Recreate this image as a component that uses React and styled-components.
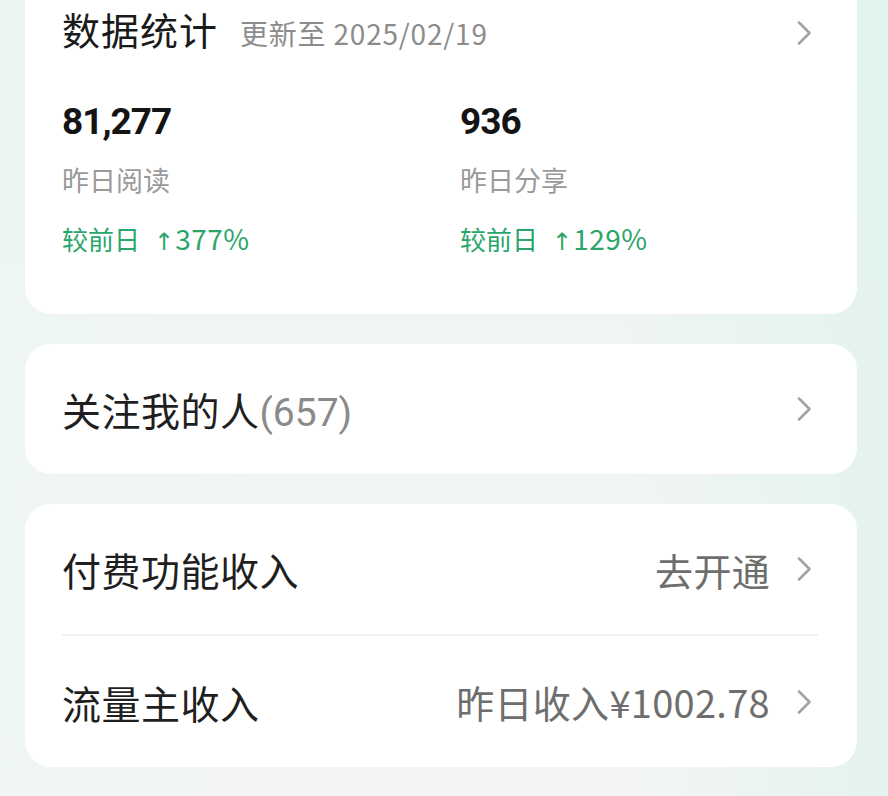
import React from "react";
import styled, { createGlobalStyle } from "styled-components";

const GlobalStyle = createGlobalStyle`
  html, body {
    margin: 0;
    padding: 0;
  }
  body {
    font-family: "Noto Sans CJK SC", "Noto Sans", sans-serif;
    background: #f3f5f5;
  }
`;

const Chevron = () => (
  <ChevronIcon width="16" height="26" viewBox="0 0 16 26" fill="none">
    <path d="M3 2.5 L13.5 13 L3 23.5" stroke="currentColor" strokeWidth="2.6" strokeLinecap="round" strokeLinejoin="round" />
  </ChevronIcon>
);

const stats = [
  { value: "81,277", label: "昨日阅读", change: "377%" },
  { value: "936", label: "昨日分享", change: "129%" },
];

const App = () => {
  return (
    <Page>
      <GlobalStyle />
      <StatsCard>
        <TitleRow>
          <TitleGroup>
            <Title>数据统计</Title>
            <UpdateText>更新至 2025/02/19</UpdateText>
          </TitleGroup>
          <TitleArrow>
            <Chevron />
          </TitleArrow>
        </TitleRow>
        <StatsGrid>
          {stats.map((s) => (
            <StatItem key={s.label}>
              <StatValue>{s.value}</StatValue>
              <StatLabel>{s.label}</StatLabel>
              <StatChange>
                <span>较前日</span>
                <Arrow>↑</Arrow>
                <ChangeNum>{s.change}</ChangeNum>
              </StatChange>
            </StatItem>
          ))}
        </StatsGrid>
      </StatsCard>

      <Card>
        <Row>
          <RowLabel>
            关注我的人<Count>(657)</Count>
          </RowLabel>
          <RowRight>
            <Chevron />
          </RowRight>
        </Row>
      </Card>

      <Card>
        <Row>
          <RowLabel>付费功能收入</RowLabel>
          <RowRight>
            <RowValue>去开通</RowValue>
            <Chevron />
          </RowRight>
        </Row>
        <Divider />
        <Row $tall>
          <RowLabel>流量主收入</RowLabel>
          <RowRight>
            <RowValue>昨日收入¥1002.78</RowValue>
            <Chevron />
          </RowRight>
        </Row>
      </Card>
    </Page>
  );
};

export default App;

const Page = styled.div`
  min-height: 796px;
  box-sizing: border-box;
  padding: 0 31px 30px 25px;
  display: flex;
  flex-direction: column;
  gap: 30px;
  background:
    linear-gradient(90deg, rgba(238, 246, 244, 0.9) 0%, rgba(255, 255, 255, 0) 30%, rgba(255, 255, 255, 0) 70%, rgba(226, 243, 238, 0.9) 100%),
    linear-gradient(180deg, #e9f5f2 0%, #eff5f4 40%, #f3f5f5 70%, #f4f5f5 100%);
`;

const Card = styled.div`
  background: #ffffff;
  border-radius: 26px;
  padding: 0 45px 0 37px;
`;

const StatsCard = styled(Card)`
  border-radius: 0 0 26px 26px;
  padding-top: 1px;
  padding-bottom: 54px;
`;

const TitleRow = styled.div`
  display: flex;
  align-items: center;
  justify-content: space-between;
  height: 54px;
`;

const TitleGroup = styled.div`
  display: flex;
  align-items: baseline;
  gap: 22px;
`;

const Title = styled.span`
  font-size: 38px;
  color: #1a1a1a;
  letter-spacing: 1px;
`;

const UpdateText = styled.span`
  font-size: 28px;
  color: #8c8c8c;
  letter-spacing: 0.8px;
`;

const TitleArrow = styled.div`
  padding-top: 10px;
`;

const ChevronIcon = styled.svg`
  color: #a3a3a3;
  flex-shrink: 0;
  display: block;
`;

const StatsGrid = styled.div`
  display: grid;
  grid-template-columns: 398px 1fr;
  margin-top: 45px;
`;

const StatItem = styled.div`
  display: flex;
  flex-direction: column;
`;

const StatValue = styled.div`
  font-family: Roboto, "Noto Sans", sans-serif;
  font-size: 37px;
  font-weight: 700;
  line-height: 44px;
  color: #141414;
  letter-spacing: -1px;
`;

const StatLabel = styled.div`
  margin-top: 18px;
  font-size: 27px;
  line-height: 36px;
  color: #9a9a9a;
`;

const StatChange = styled.div`
  margin-top: 22px;
  font-size: 26px;
  line-height: 36px;
  color: #2ba66b;
  display: flex;
  align-items: baseline;
`;

const Arrow = styled.span`
  font-family: "DejaVu Sans", sans-serif;
  font-size: 24px;
  margin-left: 14px;
  margin-right: 1px;
`;

const ChangeNum = styled.span`
  font-size: 28px;
  letter-spacing: 0.5px;
`;

const Row = styled.div`
  display: flex;
  align-items: center;
  justify-content: space-between;
  height: ${(p) => (p.$tall ? "131px" : "130px")};
`;

const RowLabel = styled.div`
  font-size: 39px;
  color: #1f1f1f;
  letter-spacing: 0.5px;
`;

const Count = styled.span`
  font-family: Roboto, "Noto Sans", sans-serif;
  color: #8a8a8a;
  letter-spacing: 0;
`;

const RowRight = styled.div`
  display: flex;
  align-items: center;
  gap: 26px;
`;

const RowValue = styled.span`
  font-size: 38px;
  color: #6e6e6e;
  letter-spacing: 0.3px;
`;

const Divider = styled.div`
  height: 2px;
  background: #f1f1f1;
  margin-right: -6px;
`;
